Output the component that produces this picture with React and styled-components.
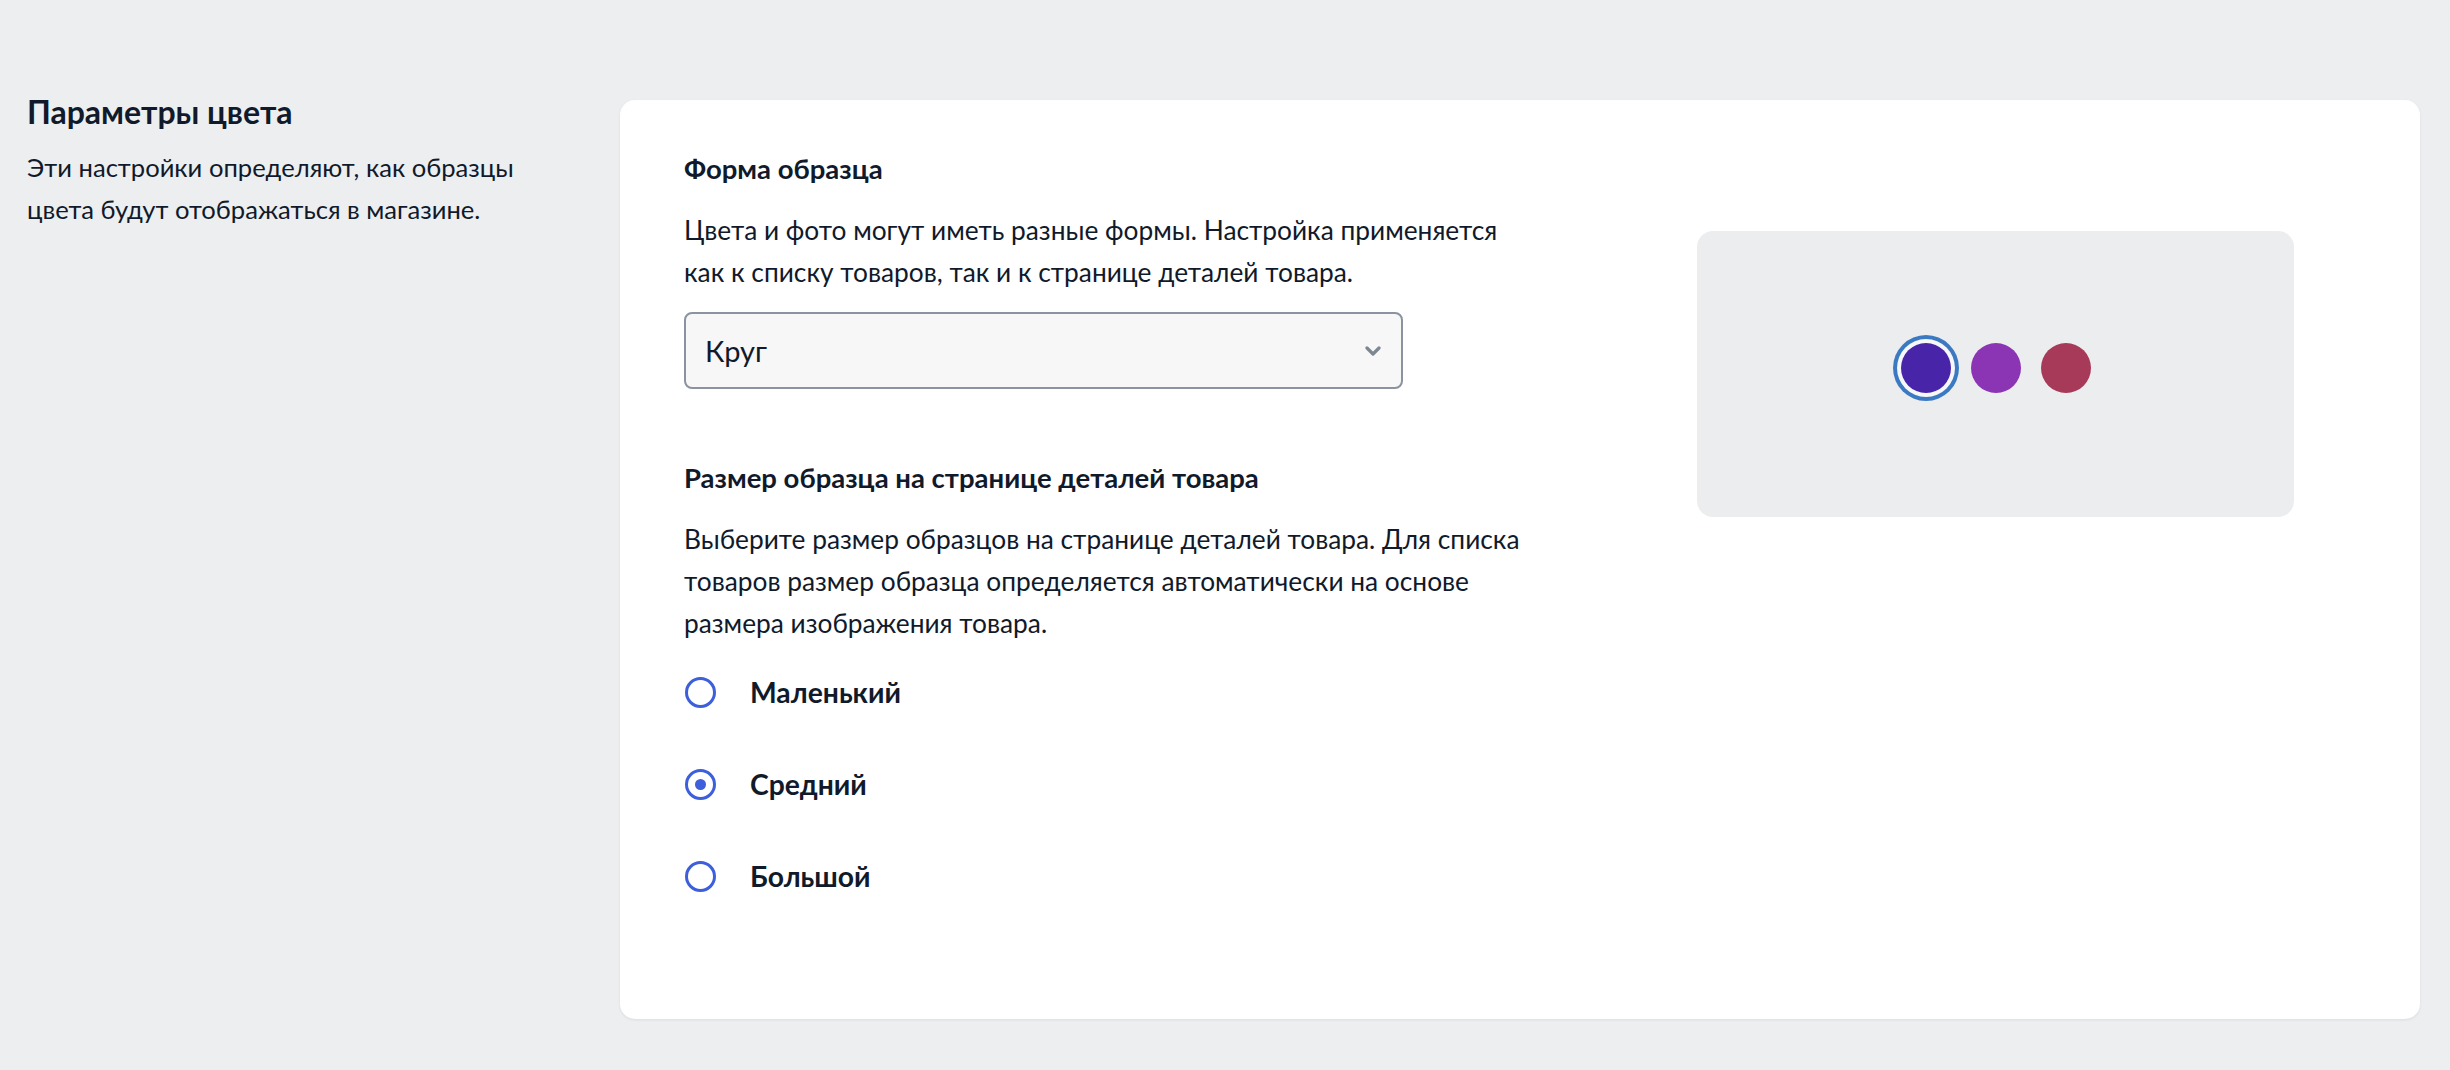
import React, { useState } from "react";
import styled, { createGlobalStyle } from "styled-components";

const Global = createGlobalStyle`
  html, body { margin: 0; padding: 0; background: #edeef0; }
  body { font-family: Lato, "Noto Sans", sans-serif; color: #101a2b; -webkit-font-smoothing: antialiased; }
  * { box-sizing: border-box; }
`;

const Page = styled.div`
  display: flex;
  align-items: flex-start;
  padding: 100px 30px 51px 27px;
  min-height: 1070px;
`;

const Aside = styled.div`
  width: 593px;
  flex: none;
`;

const AsideTitle = styled.h2`
  margin: -8px 0 0;
  font-size: 32px;
  line-height: 40px;
  font-weight: 700;
  color: #101a2b;
`;

const AsideText = styled.p`
  margin: 14px 0 0;
  font-size: 25.6px;
  line-height: 42px;
  font-weight: 400;
  max-width: 560px;
`;

const Card = styled.section`
  flex: 1;
  height: 919px;
  background: #fff;
  border-radius: 15px;
  box-shadow: 0 1px 3px rgba(20, 30, 50, 0.08);
  padding: 49px 64px 64px;
  display: flex;
  gap: 113px;
`;

const Column = styled.div`
  width: 900px;
  flex: none;
  display: flex;
  flex-direction: column;
`;

const Heading = styled.h3`
  margin: ${(p) => p.$top || 0}px 0 0;
  font-size: 27.5px;
  line-height: 40px;
  font-weight: 700;
`;

const Text = styled.p`
  margin: 20px 0 0;
  font-size: 26.3px;
  line-height: 42px;
  font-weight: 400;
  max-width: 850px;
`;

const SelectBox = styled.div`
  margin-top: 19px;
  width: 719px;
  height: 77px;
  border: 2px solid #8a939f;
  border-radius: 8px;
  background: #f7f7f7;
  display: flex;
  align-items: center;
  justify-content: space-between;
  padding: 0 20px 0 19px;
  font-size: 29px;
`;

const RadioList = styled.div`
  margin-top: 25px;
  display: flex;
  flex-direction: column;
  gap: 46px;
`;

const RadioRow = styled.label`
  display: flex;
  align-items: center;
  gap: 34px;
  height: 46px;
  cursor: pointer;
  font-size: 28.3px;
  font-weight: 700;
`;

const RadioDot = styled.span`
  width: 31px;
  height: 31px;
  margin-left: 1px;
  border-radius: 50%;
  border: 3px solid #3d5fdc;
  display: flex;
  align-items: center;
  justify-content: center;
  &::after {
    content: "";
    width: 11px;
    height: 11px;
    border-radius: 50%;
    background: #3d5fdc;
    display: ${(p) => (p.$on ? "block" : "none")};
  }
`;

const Preview = styled.div`
  margin-top: 82px;
  width: 597px;
  height: 286px;
  flex: none;
  border-radius: 16px;
  background: #ecedef;
  display: flex;
  align-items: center;
  justify-content: center;
  gap: 20px;
  padding-bottom: 12px;
`;

const Swatch = styled.span`
  width: 50px;
  height: 50px;
  border-radius: 50%;
  background: ${(p) => p.$color};
  box-shadow: ${(p) =>
    p.$selected ? "0 0 0 4px #f6f7f9, 0 0 0 8px #3b7ac2" : "none"};
`;

const options = ["Маленький", "Средний", "Большой"];

export default function App() {
  const [size, setSize] = useState("Средний");
  return (
    <>
      <Global />
      <Page>
        <Aside>
          <AsideTitle>Параметры цвета</AsideTitle>
          <AsideText>
            Эти настройки определяют, как образцы цвета будут отображаться в
            магазине.
          </AsideText>
        </Aside>
        <Card>
          <Column>
            <Heading>Форма образца</Heading>
            <Text>
              Цвета и фото могут иметь разные формы. Настройка применяется как к
              списку товаров, так и к странице деталей товара.
            </Text>
            <SelectBox>
              <span>Круг</span>
              <svg width="16" height="12" viewBox="0 0 16 12">
                <polyline
                  points="2,3 8,9 14,3"
                  fill="none"
                  stroke="#7d8793"
                  strokeWidth="3.2"
                  strokeLinecap="round"
                  strokeLinejoin="round"
                />
              </svg>
            </SelectBox>
            <Heading $top={69}>Размер образца на странице деталей товара</Heading>
            <Text>
              Выберите размер образцов на странице деталей товара. Для списка
              товаров размер образца определяется автоматически на основе
              размера изображения товара.
            </Text>
            <RadioList>
              {options.map((o) => (
                <RadioRow key={o} onClick={() => setSize(o)}>
                  <RadioDot $on={size === o} />
                  {o}
                </RadioRow>
              ))}
            </RadioList>
          </Column>
          <Preview>
            <Swatch $color="#4824a8" $selected />
            <Swatch $color="#8b35b4" />
            <Swatch $color="#a63a58" />
          </Preview>
        </Card>
      </Page>
    </>
  );
}
